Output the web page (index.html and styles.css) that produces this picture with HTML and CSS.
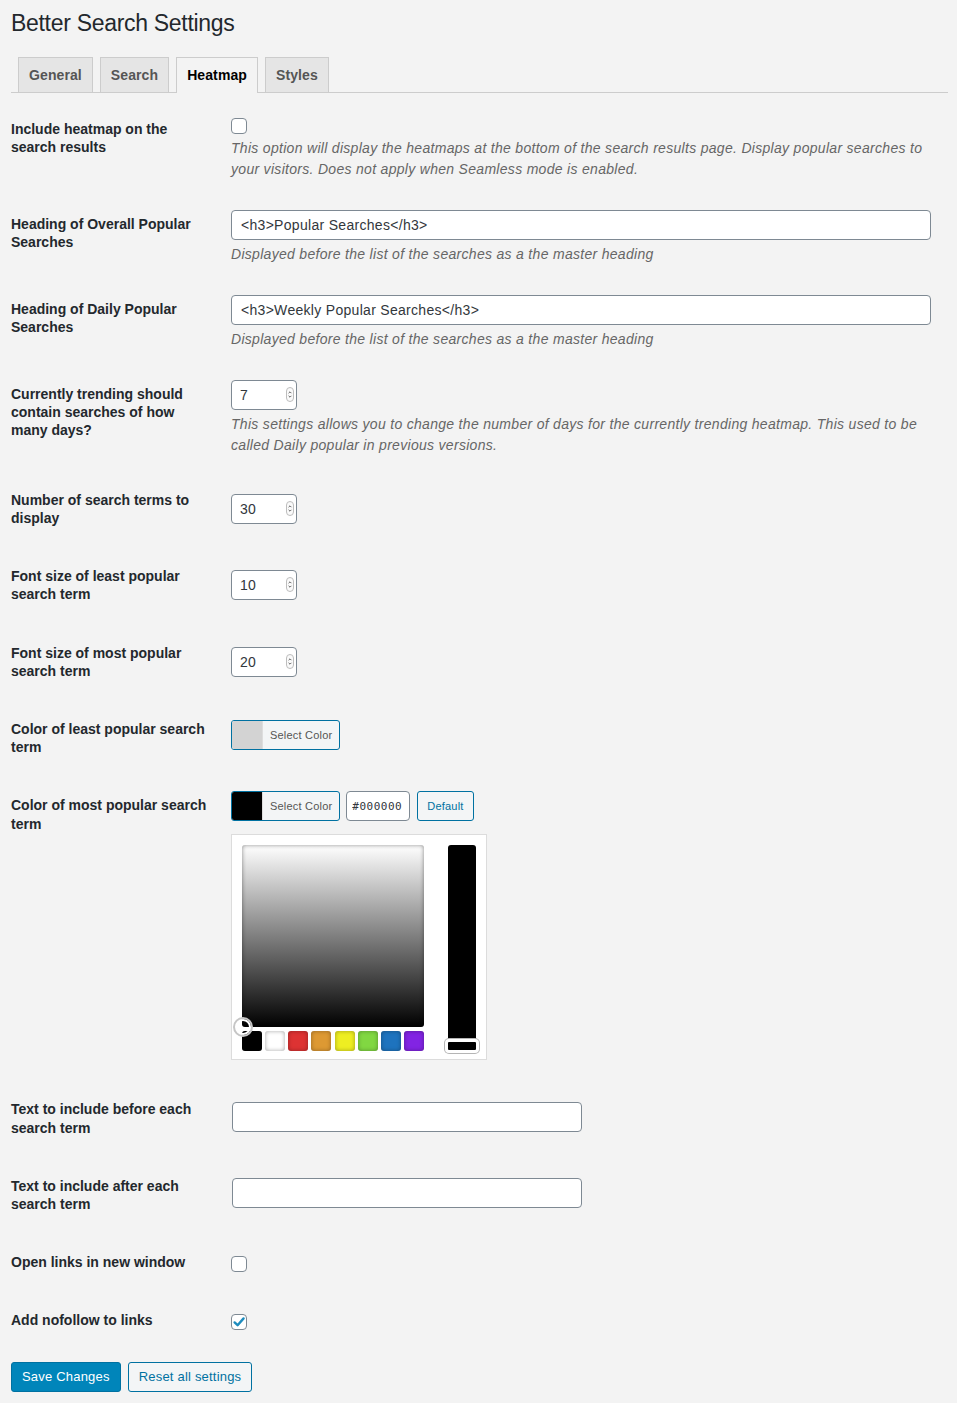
FILE: index.html
```html
<!DOCTYPE html>
<html lang="en">
<head>
<meta charset="utf-8">
<title>Better Search Settings</title>
<link rel="stylesheet" href="styles.css">
</head>
<body>
<div class="wrap">
  <h1 class="title">Better Search Settings</h1>
  <nav class="tabs">
    <a class="tab">General</a>
    <a class="tab">Search</a>
    <a class="tab active">Heatmap</a>
    <a class="tab">Styles</a>
  </nav>

  <table class="form-table">
    <tr>
      <th>Include heatmap on the search results</th>
      <td>
        <span class="cb"><input type="checkbox"></span>
        <p class="description">This option will display the heatmaps at the bottom of the search results page. Display popular searches to your visitors. Does not apply when Seamless mode is enabled.</p>
      </td>
    </tr>
    <tr>
      <th>Heading of Overall Popular Searches</th>
      <td>
        <input class="text large" type="text" value="&lt;h3&gt;Popular Searches&lt;/h3&gt;">
        <p class="description">Displayed before the list of the searches as a the master heading</p>
      </td>
    </tr>
    <tr>
      <th>Heading of Daily Popular Searches</th>
      <td>
        <input class="text large" type="text" value="&lt;h3&gt;Weekly Popular Searches&lt;/h3&gt;">
        <p class="description">Displayed before the list of the searches as a the master heading</p>
      </td>
    </tr>
    <tr>
      <th>Currently trending should contain searches of how many days?</th>
      <td>
        <span class="num"><input type="number" value="7"><svg class="spin" viewBox="0 0 8 15" width="8" height="15"><rect x="0.5" y="0.5" width="7" height="14" rx="3.5" fill="#fafafa" stroke="#bdbdbd"/><path d="M2.6 6.2 L4 4.8 L5.4 6.2 M2.6 8.8 L4 10.2 L5.4 8.8" fill="none" stroke="#555" stroke-width="0.9"/></svg></span>
        <p class="description">This settings allows you to change the number of days for the currently trending heatmap. This used to be called Daily popular in previous versions.</p>
      </td>
    </tr>
    <tr>
      <th>Number of search terms to display</th>
      <td>
        <span class="num"><input type="number" value="30"><svg class="spin" viewBox="0 0 8 15" width="8" height="15"><rect x="0.5" y="0.5" width="7" height="14" rx="3.5" fill="#fafafa" stroke="#bdbdbd"/><path d="M2.6 6.2 L4 4.8 L5.4 6.2 M2.6 8.8 L4 10.2 L5.4 8.8" fill="none" stroke="#555" stroke-width="0.9"/></svg></span>
      </td>
    </tr>
    <tr>
      <th>Font size of least popular search term</th>
      <td>
        <span class="num"><input type="number" value="10"><svg class="spin" viewBox="0 0 8 15" width="8" height="15"><rect x="0.5" y="0.5" width="7" height="14" rx="3.5" fill="#fafafa" stroke="#bdbdbd"/><path d="M2.6 6.2 L4 4.8 L5.4 6.2 M2.6 8.8 L4 10.2 L5.4 8.8" fill="none" stroke="#555" stroke-width="0.9"/></svg></span>
      </td>
    </tr>
    <tr>
      <th>Font size of most popular search term</th>
      <td>
        <span class="num"><input type="number" value="20"><svg class="spin" viewBox="0 0 8 15" width="8" height="15"><rect x="0.5" y="0.5" width="7" height="14" rx="3.5" fill="#fafafa" stroke="#bdbdbd"/><path d="M2.6 6.2 L4 4.8 L5.4 6.2 M2.6 8.8 L4 10.2 L5.4 8.8" fill="none" stroke="#555" stroke-width="0.9"/></svg></span>
      </td>
    </tr>
    <tr>
      <th>Color of least popular search term</th>
      <td>
        <div class="picker-row">
          <button class="color-result" type="button"><span class="swatch swatch-light"></span><span class="cr-text">Select Color</span></button>
        </div>
      </td>
    </tr>
    <tr>
      <th>Color of most popular search term</th>
      <td>
        <div class="picker-row">
          <button class="color-result" type="button"><span class="swatch swatch-dark"></span><span class="cr-text">Select Color</span></button>
          <input class="hex" type="text" value="#000000">
          <button class="btn-small" type="button">Default</button>
        </div>
        <div class="iris">
          <div class="iris-left">
            <div class="iris-square">
              <span class="iris-handle"></span>
            </div>
            <div class="palette">
              <span class="pal" style="background:#000000"></span>
              <span class="pal" style="background:#ffffff"></span>
              <span class="pal" style="background:#dd3333"></span>
              <span class="pal" style="background:#dd9933"></span>
              <span class="pal" style="background:#eeee22"></span>
              <span class="pal" style="background:#81d742"></span>
              <span class="pal" style="background:#1e73be"></span>
              <span class="pal" style="background:#8224e3"></span>
            </div>
          </div>
          <div class="iris-slider">
            <span class="slider-handle"></span>
          </div>
        </div>
      </td>
    </tr>
    <tr>
      <th>Text to include before each search term</th>
      <td><input class="text regular" type="text" value=""></td>
    </tr>
    <tr>
      <th>Text to include after each search term</th>
      <td><input class="text regular" type="text" value=""></td>
    </tr>
    <tr>
      <th>Open links in new window</th>
      <td><span class="cb"><input type="checkbox"></span></td>
    </tr>
    <tr>
      <th>Add nofollow to links</th>
      <td><span class="cb"><input type="checkbox" checked><svg class="check" viewBox="0 0 16 16" width="16" height="16"><path d="M3.6 8.4 L6.6 11.2 L12.6 4.4" fill="none" stroke="#1e8cbe" stroke-width="2.4" stroke-linecap="round" stroke-linejoin="round"/></svg></span></td>
    </tr>
  </table>

  <div class="submit">
    <button class="btn-primary" type="button">Save Changes</button>
    <button class="btn-secondary" type="button">Reset all settings</button>
  </div>
</div>
</body>
</html>
```
FILE: styles.css
```css
html, body {
  margin: 0;
  padding: 0;
}
body {
  background: #f3f3f3;
  font-family: "Liberation Sans", Arial, sans-serif;
  color: #444;
  font-size: 13px;
}
.wrap {
  padding: 0 9px 0 11px;
}
.title {
  margin: 0;
  padding: 9px 0 4px;
  font-size: 23px;
  font-weight: 400;
  line-height: 1.3;
  letter-spacing: -0.3px;
  color: #23282d;
}
.tabs {
  display: flex;
  gap: 7px;
  margin-top: 14px;
  padding-left: 7px;
  border-bottom: 1px solid #ccc;
}
.tab {
  display: block;
  border: 1px solid #ccc;
  border-bottom: none;
  background: #e5e5e5;
  color: #555;
  font-size: 14px;
  font-weight: 700;
  line-height: 24px;
  letter-spacing: 0.1px;
  padding: 5px 10px;
}
.tab.active {
  background: #f3f3f3;
  color: #000;
  margin-bottom: -1px;
  padding-bottom: 6px;
}
.form-table {
  width: 100%;
  border-collapse: collapse;
  margin-top: 7px;
}
.form-table th {
  width: 200px;
  padding: 20px 10px 20px 0;
  text-align: left;
  vertical-align: top;
  font-size: 14px;
  font-weight: 700;
  line-height: 1.3;
  color: #23282d;
}
.form-table td {
  padding: 15px 10px;
  vertical-align: middle;
  font-size: 14px;
  line-height: 1.3;
}
.description {
  margin: 4px 0 0;
  font-style: italic;
  color: #666;
  line-height: 1.5;
  letter-spacing: 0.3px;
}
.cb {
  position: relative;
  display: block;
  width: 16px;
  height: 16px;
  margin-top: 3px;
}
.cb input {
  -webkit-appearance: none;
  appearance: none;
  display: block;
  box-sizing: border-box;
  width: 16px;
  height: 16px;
  margin: 0;
  border: 1px solid #7e8993;
  border-radius: 4px;
  background: #fff;
}
.check {
  position: absolute;
  left: 0;
  top: 0;
}
.text {
  display: block;
  box-sizing: border-box;
  height: 30px;
  margin: 0;
  padding: 0 8px 0 9px;
  border: 1px solid #7e8993;
  border-radius: 4px;
  background: #fff;
  color: #32373c;
  font-family: "Liberation Sans", Arial, sans-serif;
  font-size: 14px;
  letter-spacing: 0.3px;
}
.text.large {
  width: 99%;
}
.text.regular {
  width: 350px;
  margin: 0 0 4px 1px;
}
.num {
  position: relative;
  display: block;
  width: 66px;
  height: 30px;
}
.num input {
  display: block;
  box-sizing: border-box;
  width: 66px;
  height: 30px;
  margin: 0;
  padding: 0 8px;
  border: 1px solid #7e8993;
  border-radius: 4px;
  background: #fff;
  color: #32373c;
  font-family: "Liberation Sans", Arial, sans-serif;
  font-size: 14px;
  letter-spacing: 0.3px;
  -moz-appearance: textfield;
}
.num input::-webkit-inner-spin-button,
.num input::-webkit-outer-spin-button {
  -webkit-appearance: none;
  margin: 0;
}
.spin {
  position: absolute;
  right: 3px;
  top: 7px;
}
.picker-row {
  display: flex;
  align-items: stretch;
  gap: 6px;
  margin-bottom: 6px;
  height: 30px;
}
.color-result {
  display: flex;
  align-items: stretch;
  box-sizing: border-box;
  height: 30px;
  margin: 0;
  padding: 0;
  border: 1px solid #0071a1;
  border-radius: 3px;
  background: #f3f5f6;
  overflow: hidden;
  cursor: pointer;
}
.swatch {
  display: block;
  width: 30px;
}
.swatch-light {
  background: #d3d3d3;
}
.swatch-dark {
  background: #000;
}
.cr-text {
  display: block;
  padding: 0 7px 0 7px;
  border-left: 1px solid #ddd;
  color: #555;
  font-family: "Liberation Sans", Arial, sans-serif;
  font-size: 11px;
  line-height: 28px;
  letter-spacing: 0.2px;
}
.hex {
  box-sizing: border-box;
  width: 64px;
  height: 30px;
  margin: 0;
  padding: 0 5px;
  border: 1px solid #7e8993;
  border-radius: 4px;
  background: #fff;
  color: #32373c;
  font-family: "DejaVu Sans Mono", monospace;
  font-size: 11px;
  letter-spacing: 0.5px;
}
.btn-small {
  box-sizing: border-box;
  height: 30px;
  margin: 0 0 0 1px;
  padding: 0 9px;
  border: 1px solid #0071a1;
  border-radius: 3px;
  background: #f3f5f6;
  color: #0071a1;
  font-family: "Liberation Sans", Arial, sans-serif;
  font-size: 11px;
  letter-spacing: 0.2px;
}
.iris {
  display: flex;
  box-sizing: border-box;
  width: 256px;
  height: 226px;
  margin: 13px 0 5px;
  padding: 10px 10px 8px;
  border: 1px solid #dcdcdc;
  background: #fff;
}
.iris-left {
  width: 182px;
}
.iris-square {
  position: relative;
  width: 182px;
  height: 182px;
  border-radius: 3px;
  background: linear-gradient(to bottom, #ffffff 0%, #000000 100%);
  box-shadow: inset 0 0 4px rgba(0, 0, 0, 0.45);
}
.iris-handle {
  position: absolute;
  left: -9px;
  bottom: -10px;
  box-sizing: border-box;
  width: 20px;
  height: 20px;
  border: 2px solid #c6c6c6;
  border-radius: 50%;
  box-shadow: inset 0 0 0 2px #fff;
}
.palette {
  display: flex;
  justify-content: space-between;
  margin-top: 4px;
}
.pal {
  display: block;
  width: 20px;
  height: 20px;
  border-radius: 3px;
  box-shadow: inset 0 0 4px rgba(0, 0, 0, 0.35);
}
.iris-slider {
  position: relative;
  width: 28px;
  height: 205px;
  margin-left: 24px;
  border-radius: 3px;
  background: #000;
}
.slider-handle {
  position: absolute;
  left: -3px;
  bottom: -3px;
  box-sizing: border-box;
  width: 34px;
  height: 14px;
  border: 3px solid #fff;
  border-radius: 4px;
  background: #000;
  box-shadow: 0 0 0 1px #b5b5b5;
}
.submit {
  display: flex;
  gap: 7px;
  margin-top: 12px;
  padding-bottom: 12px;
}
.btn-primary,
.btn-secondary {
  box-sizing: border-box;
  height: 30px;
  margin: 0;
  padding: 0 10px;
  border-radius: 3px;
  font-family: "Liberation Sans", Arial, sans-serif;
  font-size: 13px;
  line-height: 28px;
  letter-spacing: 0.2px;
  cursor: pointer;
}
.btn-primary {
  border: 1px solid #0071a1;
  background: #0085ba;
  color: #fff;
}
.btn-secondary {
  border: 1px solid #0071a1;
  background: #f3f5f6;
  color: #0071a1;
}
```
